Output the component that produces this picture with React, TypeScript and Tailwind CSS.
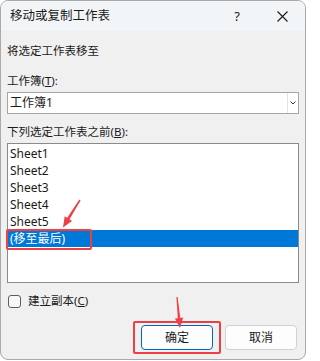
const sheets = ["Sheet1", "Sheet2", "Sheet3", "Sheet4", "Sheet5"];

const font = { fontFamily: '"Noto Sans", "Noto Sans CJK SC", sans-serif' };

export default function App() {
  return (
    <div className="relative h-[361px] w-[306px] bg-white text-[#1a1a1a]" style={font}>
      <div className="flex h-[360px] w-[306px] flex-col overflow-hidden rounded-[8px] border border-[#a9a9a9] bg-[#f0f0f0]">
        {/* title bar */}
        <div className="flex h-[30px] shrink-0 items-center bg-[#f2f5f7] pl-[9px]">
          <span className="text-[12.5px] leading-[16px]">移动或复制工作表</span>
          <span className="ml-auto mr-[37px] text-[13px] leading-[16px]">?</span>
          <svg width="11" height="11" viewBox="0 0 11 11" className="mr-[17px]">
            <path d="M0.5 0.5L10.5 10.5M10.5 0.5L0.5 10.5" stroke="#1a1a1a" strokeWidth="1.1" />
          </svg>
        </div>

        {/* body */}
        <div className="flex flex-col px-[6px] text-[11.5px]">
          <div className="mt-[12px] leading-[16px]">将选定工作表移至</div>
          <div className="mt-[14px] leading-[16px]">
            工作簿(<span className="underline">T</span>):
          </div>
          <div className="mt-[3px] flex h-[22px] items-center border border-[#a6a6a6] bg-white">
            <span className="pl-[2px] text-[12px] leading-[16px]">工作簿1</span>
            <div className="ml-auto flex h-full w-[11px] items-center justify-center border-l border-[#e3e3e3]">
              <svg width="6" height="4" viewBox="0 0 6 4">
                <path d="M0.5 0.5L3 3L5.5 0.5" stroke="#333" strokeWidth="1" fill="none" />
              </svg>
            </div>
          </div>
          <div className="mt-[10px] leading-[16px]">
            下列选定工作表之前(<span className="underline">B</span>):
          </div>
          <div className="mt-[3px] flex h-[140px] flex-col border border-[#8a8a8a] bg-white pt-[1px] text-[12px]">
            {sheets.map((s) => (
              <div key={s} className="h-[17px] pl-[2px] leading-[17px]">
                {s}
              </div>
            ))}
            <div className="h-[17px] bg-[#0078d7] pl-[2px] leading-[17px] text-white">(移至最后)</div>
          </div>

          <div className="mt-[10px] flex h-[16px] items-center">
            <div className="ml-[1px] h-[13px] w-[13px] rounded-[3px] border border-[#5c5c5c] bg-[#f7f7f7]" />
            <span className="ml-[7px] leading-[16px]">
              建立副本(<span className="underline">C</span>)
            </span>
          </div>

          <div className="mt-[16px] flex justify-end gap-[12px] pr-[2px]">
            <button className="h-[25px] w-[72px] rounded-[4px] border border-[#0067c0] bg-[#fdfdfd] text-[12px]">
              确定
            </button>
            <button className="h-[25px] w-[72px] rounded-[4px] border border-[#d2d2d2] bg-[#fdfdfd] text-[12px]">
              取消
            </button>
          </div>
        </div>
      </div>

      {/* annotations */}
      <div className="absolute left-[6px] top-[229px] h-[21px] w-[86px] rounded-[2px] border-2 border-[#ee3f45]" />
      <div className="absolute left-[133px] top-[321px] h-[33px] w-[88px] rounded-[2px] border-2 border-[#ee3f45]" />
      <svg className="pointer-events-none absolute left-0 top-0" width="306" height="361">
        <polygon
          fill="#ee3f45"
          points="79.4,199.6 80.6,200.4 69.5,219.3 72,220.9 63,227.5 64.7,216.2 67.2,217.8"
        />
        <polygon
          fill="#ee3f45"
          points="176.4,297 177.6,296.9 180.3,317.9 183.2,317.6 180,328 174.9,318.4 177.8,318.2"
        />
      </svg>
    </div>
  );
}
